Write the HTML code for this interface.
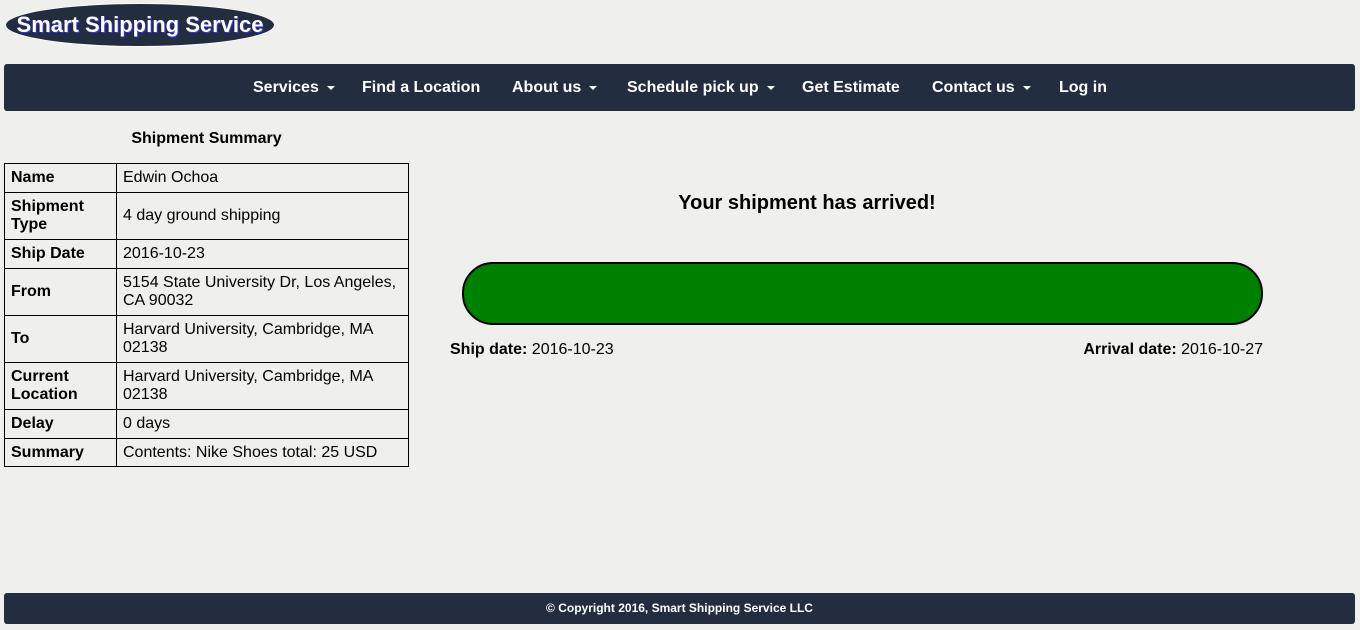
<!DOCTYPE html>
<html><head><style>
body{margin:0;background:#efefed;font-family:"Liberation Sans",Arial,sans-serif;color:#000;width:1360px;height:630px;position:relative;overflow:hidden}
.logo{position:absolute;left:5px;top:3px;width:268px;height:42px;border-radius:50%;background:#222d40;border:1px solid #fff;color:#fff;font-weight:bold;font-size:22px;line-height:41px;text-align:center;text-shadow:1px 1px 0 #3030ff}
.nav{position:absolute;left:4px;top:64px;width:1351px;height:47px;background:#222d40;border-radius:3px;color:#fff;font-weight:bold;font-size:16px}
.nav span{position:absolute;top:15px;white-space:nowrap}
.car{display:inline-block;width:0;height:0;border-left:4px solid transparent;border-right:4px solid transparent;border-top:4px solid #fff;vertical-align:middle;margin-left:8px}
h3{position:absolute;left:4px;width:405px;top:130px;margin:0;text-align:center;font-size:16px}
table{position:absolute;left:4px;top:163px;border-collapse:collapse;width:405px;font-size:16px}
td{border:1px solid #000;padding:0 6px;line-height:18px}
td:first-child{font-weight:bold;width:99px}
.msg{position:absolute;left:462px;width:690px;top:192px;text-align:center;font-weight:bold;font-size:20px}
.bar{position:absolute;left:462px;top:262px;width:797px;height:59px;border:2px solid #000;border-radius:31px;background:#008000}
.d{position:absolute;top:341px;font-size:16px}
.foot{position:absolute;left:4px;top:593px;width:1351px;height:31px;background:#222d40;border-radius:3px;color:#fff;font-weight:bold;font-size:12px;text-align:center;line-height:31px}
</style></head><body>
<div class="logo">Smart Shipping Service</div>
<div class="nav">
<span style="left:249px">Services<i class="car"></i></span>
<span style="left:358px">Find a Location</span>
<span style="left:508px">About us<i class="car"></i></span>
<span style="left:623px">Schedule pick up<i class="car"></i></span>
<span style="left:798px">Get Estimate</span>
<span style="left:928px">Contact us<i class="car"></i></span>
<span style="left:1055px">Log in</span>
</div>
<h3>Shipment Summary</h3>
<table>
<tr style="height:29px"><td>Name</td><td>Edwin Ochoa</td></tr>
<tr style="height:47px"><td>Shipment Type</td><td>4 day ground shipping</td></tr>
<tr style="height:29px"><td>Ship Date</td><td>2016-10-23</td></tr>
<tr style="height:47px"><td>From</td><td>5154 State University Dr, Los Angeles, CA 90032</td></tr>
<tr style="height:47px"><td>To</td><td>Harvard University, Cambridge, MA 02138</td></tr>
<tr style="height:47px"><td>Current Location</td><td>Harvard University, Cambridge, MA 02138</td></tr>
<tr style="height:29px"><td>Delay</td><td>0 days</td></tr>
<tr style="height:28px"><td>Summary</td><td>Contents: Nike Shoes total: 25 USD</td></tr>
</table>
<div class="msg">Your shipment has arrived!</div>
<div class="bar"></div>
<div class="d" style="left:450px"><b>Ship date:</b> 2016-10-23</div>
<div class="d" style="right:97px"><b>Arrival date:</b> 2016-10-27</div>
<div class="foot">© Copyright 2016, Smart Shipping Service LLC</div>
</body></html>
